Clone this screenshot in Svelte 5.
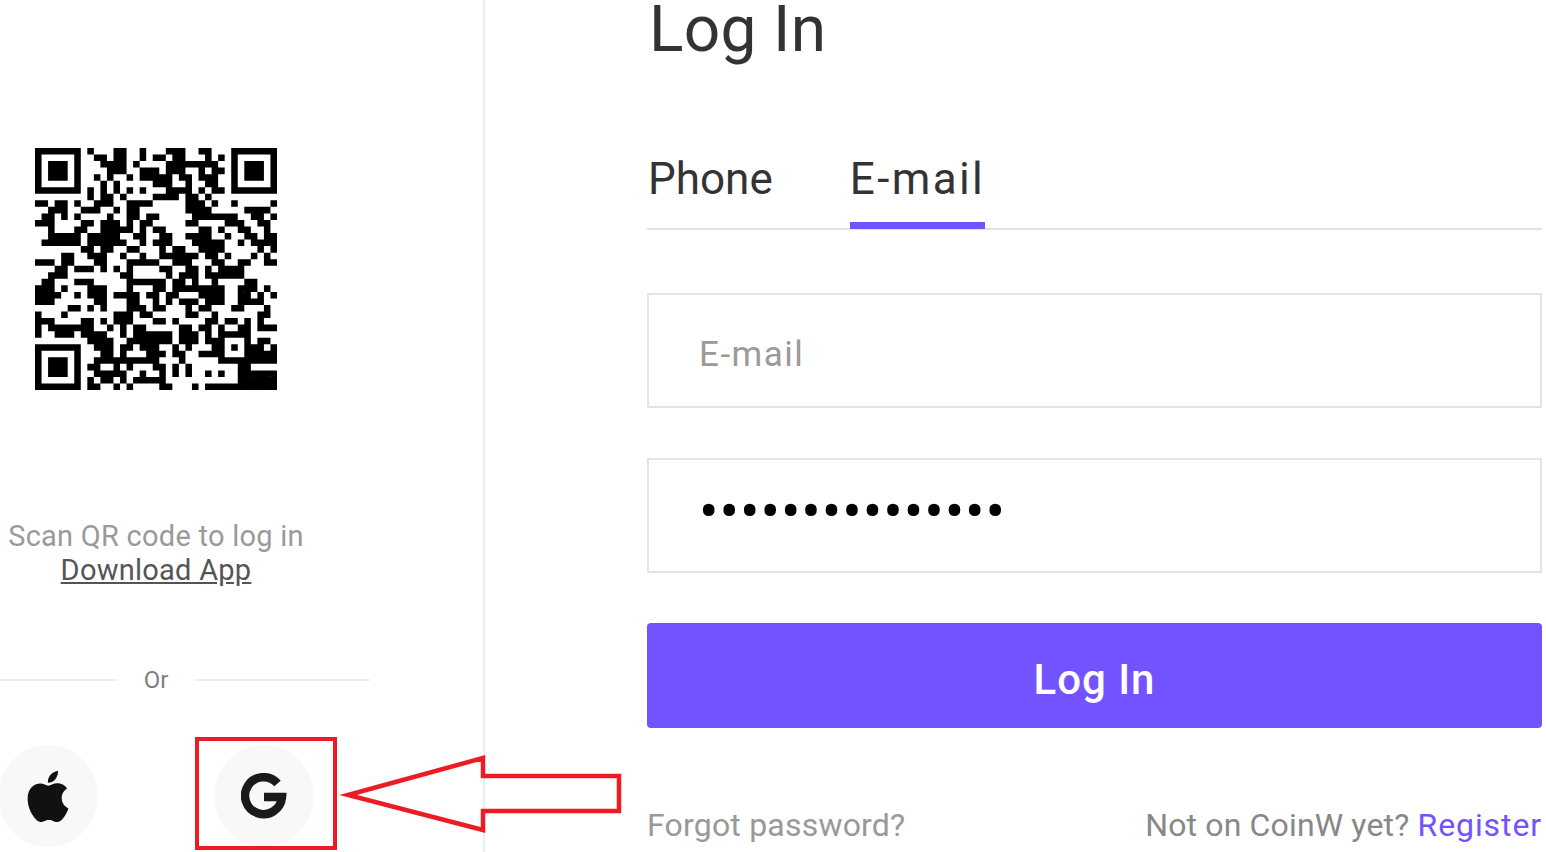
<script>
  // dark modules per row, as column lists; finder and alignment patterns are stamped on below
  const rows = [
    '8 12-13 16 20-22 25-26',
    '9-10 12-13 16 18-19 21-22 26 28',
    '10-13 15 20-27',
    '11-13 16-18 20-22 25 27-28',
    '9 11 14 16-20 22-23 25-27',
    '10 12 18-20 23 26-27',
    '8 10 12 14 16 20-23 25 27-28',
    '8 10-11 13 18-21 23-24 26',
    '0-1 3-4 6 9-11 14-17 23-25 27 30 36',
    '2-4 7-9 12 14-15 23-26 32-35',
    '1-2 4 6 11 14-15 17-18 24-30 33-34 36',
    '0-2 7-8 10-12 14 16-17 23-24 29-31 34-35',
    '2 6-7 10-14 16 18-19 25-26 28 31-32 35',
    '2-6 8-12 15-16 19-20 23-26 29 32-33 35-36',
    '1-6 8-13 16 18-20 24-28 31 33-36',
    '7-8 10-11 14-15 19 21-22 25-28 34 36',
    '4-5 8-10 13 16 19-24 26-27 29 33 35',
    '0-2 4-5 9-10 14-18 21-23 27-28 31-32 35-36',
    '3-4 6-8 10 12 14 19-20 23-24 26 28-31',
    '2-4 13-14 20 22-24 26-31',
    '1-2 6-8 14-19 21-22 24 27 32-33',
    '0-2 4 8-10 14 18-19 21-28 31-33 35',
    '0-3 6 8-10 12-15 17-18 20-21 25-28 31-32 34 36',
    '0-2 9-10 14-15 18 20 22-24 26-28 31-34',
    '5-6 8 10 14-16 18-19 23 25-26 30-31 35',
    '0 4 12-14 16-17 23-24 27 34-35',
    '0-2 7-8 10 12-14 18-19 21 26-27 29-30 32 34',
    '0 2-8 11 13 15-16 22-23 25-26 28 31-32 34-36',
    '0 3-5 7-10 13 15-20 22-24 26',
    '8-11 14-20 22-24 26-27 34-35',
    '9-11 13-14 16-18 21 23 27 33-34 36',
    '10-11 13 17-19 21-22 25-27 33-36',
    '9-18 22 33-36',
    '8-9 12 14 18-19 21 23 31-32',
    '9-13 16 19 21 23 26 28 31-36',
    '8 10-11 13 15-19 31-36',
    '8-9 12 14 19-20 24 26-36'
  ]

  const size = 37
  const grid = rows.map((row) => {
    const line = new Array(size).fill(false)
    for (const part of row.split(' ')) {
      const [a, b] = part.split('-').map(Number)
      for (let i = a; i <= (b ?? a); i++) line[i] = true
    }
    return line
  })

  function stamp(x, y, n) {
    for (let j = 0; j < n; j++) {
      for (let i = 0; i < n; i++) {
        grid[y + j][x + i] = Math.min(i, j, n - 1 - i, n - 1 - j) !== 1
      }
    }
  }
  function clear(x, y, w, h) {
    for (let j = y; j < y + h; j++) for (let i = x; i < x + w; i++) grid[j][i] = false
  }

  clear(0, 0, 8, 8)
  clear(29, 0, 8, 8)
  clear(0, 29, 8, 8)
  stamp(0, 0, 7)
  stamp(30, 0, 7)
  stamp(0, 30, 7)
  stamp(28, 28, 5)

  let qrPath = ''
  for (let y = 0; y < size; y++) {
    for (let x = 0; x < size; x++) {
      if (grid[y][x]) qrPath += `M${x} ${y}h1v1h-1z`
    }
  }
</script>

<div class="page">
  <section class="left">
    <svg class="qr" viewBox="0 0 37 37" width="242" height="242" aria-label="QR code">
      <path d={qrPath} fill="#000" />
    </svg>
    <p class="scan">Scan QR code to log in</p>
    <a class="download" href="#app">Download App</a>
    <div class="or">
      <span class="rule"></span>
      <span class="or-text">Or</span>
      <span class="rule"></span>
    </div>
    <div class="social">
      <div class="circle">
        <svg width="50" height="51" viewBox="0 0 24 24" preserveAspectRatio="none" fill="#111">
          <path d="M12.152 6.896c-.948 0-2.415-1.078-3.96-1.04-2.04.027-3.91 1.183-4.961 3.014-2.117 3.675-.546 9.103 1.519 12.09 1.013 1.454 2.208 3.09 3.792 3.039 1.52-.065 2.09-.987 3.935-.987 1.831 0 2.35.987 3.96.948 1.637-.026 2.676-1.48 3.676-2.948 1.156-1.688 1.636-3.325 1.662-3.415-.039-.013-3.182-1.221-3.22-4.857-.026-3.04 2.48-4.494 2.597-4.559-1.429-2.09-3.623-2.324-4.39-2.376-2-.156-3.675 1.09-4.61 1.09zM15.53 3.83c.843-1.012 1.4-2.427 1.245-3.83-1.207.052-2.662.805-3.532 1.818-.78.896-1.454 2.338-1.273 3.714 1.338.104 2.715-.688 3.559-1.701" />
        </svg>
      </div>
      <div class="circle">
        <svg width="46" height="46" viewBox="0 0 46 46" fill="none" stroke="#1a1a1a" stroke-width="8.5">
          <path d="M36.5 10.5A18.5 18.5 0 1 0 41 24H23" />
        </svg>
      </div>
    </div>
  </section>

  <section class="right">
    <h1>Log In</h1>
    <div class="tabs">
      <span class="tab">Phone</span>
      <span class="tab active">E-mail</span>
    </div>
    <input class="field" type="text" placeholder="E-mail" readonly />
    <input class="field password" type="password" value="123456789012345" readonly />
    <button class="submit">Log In</button>
    <div class="foot">
      <span class="forgot">Forgot password?</span>
      <span class="register">Not on CoinW yet? <em>Register</em></span>
    </div>
  </section>

  <!-- annotation drawn on top of the screenshot -->
  <svg class="marks" width="1546" height="852" fill="none" stroke="#ed1c24">
    <rect x="197" y="739" width="138" height="109" stroke-width="4" />
    <path d="M348 795L483 758V776H619V811H483V830Z" stroke-width="4.5" />
  </svg>
</div>

<style>
  :global(body) {
    margin: 0;
    background: #fff;
  }
  .page {
    position: relative;
    width: 1546px;
    height: 852px;
    overflow: hidden;
    display: flex;
    font-family: Roboto, 'Liberation Sans', sans-serif;
  }
  .left {
    width: 312px;
    flex: none;
    padding-top: 148px;
    padding-right: 171px;
    border-right: 2px solid #eeeeee;
    display: flex;
    flex-direction: column;
    align-items: center;
  }
  .qr {
    flex: none;
    display: block;
  }
  .scan {
    margin: 129px 0 0;
    font-size: 29px;
    line-height: 34px;
    letter-spacing: 0.25px;
    color: #9a9a9a;
    white-space: nowrap;
  }
  .download {
    font-size: 29px;
    line-height: 34px;
    letter-spacing: 0.25px;
    color: #555;
    white-space: nowrap;
  }
  .or {
    flex: none;
    width: 428px;
    margin-top: 78px;
    display: flex;
    align-items: center;
    gap: 26px;
    font-size: 24px;
    line-height: 30px;
    color: #808080;
  }
  .rule {
    flex: 1;
    height: 2px;
    background: #eeeeee;
  }
  .social {
    flex: none;
    margin-top: 50px;
    display: flex;
    gap: 116px;
    justify-content: center;
  }
  .circle {
    width: 100px;
    height: 102px;
    border-radius: 50%;
    background: #f8f8f8;
    display: flex;
    align-items: center;
    justify-content: center;
  }
  .right {
    flex: 1;
    margin-left: 162px;
    margin-right: 4px;
    display: flex;
    flex-direction: column;
    min-width: 0;
  }
  h1 {
    margin: 0;
    padding-left: 2px;
    font-size: 64px;
    line-height: 60px;
    font-weight: 400;
    letter-spacing: 0.3px;
    color: #333;
    white-space: nowrap;
  }
  .tabs {
    margin-top: 90px;
    display: flex;
    gap: 77px;
    height: 80px;
    box-sizing: border-box;
    border-bottom: 2px solid #e2e2e2;
    padding-left: 1px;
  }
  .tab {
    font-size: 44px;
    line-height: 58px;
    color: #333;
    height: 80px;
    box-sizing: border-box;
  }
  .active {
    border-bottom: 7px solid #7352ff;
    height: 79px;
    letter-spacing: 2.4px;
  }
  .field {
    display: block;
    box-sizing: border-box;
    width: 100%;
    height: 115px;
    margin-top: 63px;
    padding: 8px 0 0 50px;
    border: 2px solid #e4e4e4;
    border-radius: 0;
    outline: none;
    background: #fff;
    font-family: inherit;
    font-size: 35px;
    letter-spacing: 1.5px;
    color: #000;
  }
  .field::placeholder {
    color: #9a9a9a;
    opacity: 1;
  }
  .password {
    margin-top: 50px;
    padding: 0 0 10px 50px;
    font-size: 58px;
    letter-spacing: 0.9px;
  }
  .submit {
    flex: none;
    height: 105px;
    margin-top: 50px;
    padding-top: 8px;
    border: none;
    border-radius: 4px;
    background: #7352ff;
    color: #fff;
    font-family: inherit;
    font-size: 42px;
    font-weight: 500;
    letter-spacing: 1px;
  }
  .foot {
    margin-top: 77px;
    display: flex;
    justify-content: space-between;
    font-size: 32px;
    line-height: 40px;
    white-space: nowrap;
  }
  .forgot {
    color: #999;
    letter-spacing: 0.2px;
  }
  .register {
    color: #888;
    letter-spacing: 0.15px;
  }
  .register em {
    font-style: normal;
    color: #7352ff;
    letter-spacing: 0.9px;
  }
  .marks {
    position: absolute;
    left: 0;
    top: 0;
    pointer-events: none;
  }
</style>
